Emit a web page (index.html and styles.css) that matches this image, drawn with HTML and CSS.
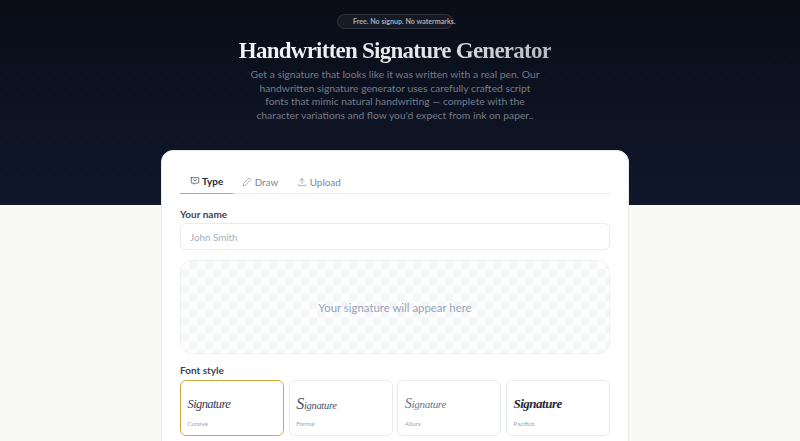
FILE: index.html
```html
<!DOCTYPE html>
<html lang="en">
<head>
<meta charset="utf-8">
<title>Handwritten Signature Generator</title>
<link rel="stylesheet" href="styles.css">
</head>
<body>
<header class="hero">
  <div class="badge"><span class="dot"></span>Free. No signup. No watermarks.</div>
  <h1>Handwritten Signature Generator</h1>
  <p class="lead">Get a signature that looks like it was written with a real pen. Our handwritten signature generator uses carefully crafted script fonts that mimic natural handwriting — complete with the character variations and flow you'd expect from ink on paper..</p>
</header>
<main class="card">
  <nav class="tabs">
    <a class="tab active">
      <svg viewBox="0 0 24 24" class="icon"><path d="M4 4h16a1 1 0 0 1 1 1v11a1 1 0 0 1-1 1h-7l-3 3v-3H4a1 1 0 0 1-1-1V5a1 1 0 0 1 1-1z"/><path d="M8 9l4 3 4-3"/></svg>Type</a>
    <a class="tab">
      <svg viewBox="0 0 24 24" class="icon"><path d="M18 3l3 3L8 20l-5 1 1-5z"/></svg>Draw</a>
    <a class="tab">
      <svg viewBox="0 0 24 24" class="icon"><path d="M12 16V4M7 9l5-5 5 5"/><path d="M3 18v1a2 2 0 0 0 2 2h14a2 2 0 0 0 2-2v-1"/></svg>Upload</a>
  </nav>
  <label class="label" for="name">Your name</label>
  <input class="input" id="name" placeholder="John Smith">
  <div class="preview">Your signature will appear here</div>
  <div class="label font-label">Font style</div>
  <div class="fonts">
    <div class="font selected"><span class="sig sig-cursive">Signature</span><span class="name">Cursive</span></div>
    <div class="font"><span class="sig sig-formal">Signature</span><span class="name">Formal</span></div>
    <div class="font"><span class="sig sig-allura">Signature</span><span class="name">Allura</span></div>
    <div class="font"><span class="sig sig-pacifico">Signature</span><span class="name">Pacifico</span></div>
  </div>
</main>
</body>
</html>
```
FILE: styles.css
```css
* { box-sizing: border-box; }
html, body { margin: 0; height: 441px; overflow: hidden; }
body { background: #fafaf5; font-family: "Lato", "Liberation Sans", sans-serif; color: #1e293b; }

.hero {
  height: 205px;
  padding: 14px 10px 0 0;
  display: flex;
  flex-direction: column;
  align-items: center;
  background-color: #0c1222;
  background-image:
    radial-gradient(circle, rgba(148,163,184,.07) 0.7px, transparent 1px),
    linear-gradient(180deg, #0a0d18 0%, #0f172a 100%);
  background-size: 16px 16px, 100% 100%;
}
.badge {
  height: 15px;
  width: 116px;
  padding: 0 0 0 11px;
  display: flex;
  align-items: center;
  gap: 4px;
  border: 1px solid rgba(255,255,255,.11);
  border-radius: 8px;
  background: rgba(255,255,255,.05);
  color: #a4a8b0;
  font-size: 7.1px;
  font-weight: 700;
  white-space: nowrap;
}
.dot { width: 3px; height: 3px; border-radius: 50%; background: #1f7a5c; }
h1 {
  margin: 8px 0 0;
  font-family: "Liberation Serif", serif;
  font-size: 23px;
  letter-spacing: -0.75px;
  line-height: 28px;
  font-weight: 700;
  white-space: nowrap;
  color: transparent;
  background: linear-gradient(90deg, #f4f5f7 0%, #e8eaee 55%, #b6bac2 100%);
  -webkit-background-clip: text;
  background-clip: text;
}
.lead {
  margin: 3px 0 0;
  width: 292px;
  text-align: center;
  font-size: 10.3px;
  line-height: 13.7px;
  color: #757b88;
}

.card {
  width: 468px;
  height: 320px;
  margin: -55px 0 0 161px;
  padding: 18px 18px 0;
  position: relative;
  background: #fff;
  border: 1px solid #e8eaee;
  border-radius: 12px;
}
.tabs { display: flex; height: 25px; border-bottom: 1px solid #e8ebf0; }
.tab {
  display: flex;
  align-items: center;
  gap: 2.5px;
  height: 25px;
  padding: 0 9.5px;
  font-size: 9.9px;
  color: #7a8598;
}
.tab.active { color: #1e293b; font-weight: 700; border-bottom: 1.5px solid #d4a73a; }
.icon { width: 10px; height: 10px; fill: none; stroke: currentColor; stroke-width: 1.5; stroke-linecap: round; stroke-linejoin: round; }

.label { display: block; margin-top: 14px; font-size: 10px; line-height: 12px; font-weight: 700; color: #3a4556; }
.input {
  display: block;
  width: 100%;
  height: 27px;
  margin-top: 3px;
  padding: 0 9px;
  border: 1px solid #e8ebf0;
  border-radius: 6px;
  background: #fff;
  font: 400 9.8px "Lato", sans-serif;
}
.input::placeholder { color: #a3afc0; opacity: 1; }
.preview {
  height: 94px;
  margin-top: 10px;
  display: flex;
  align-items: center;
  justify-content: center;
  border: 1px solid #edf0f4;
  border-radius: 12px;
  background-color: #fff;
  background-image: conic-gradient(#f5f6fa 25%, #fff 0 50%, #f5f6fa 0 75%, #fff 0);
  background-size: 16px 16px;
  color: #94a3b8;
  font-size: 11.4px;
}
.font-label { margin-top: 10px; }
.fonts { display: grid; grid-template-columns: repeat(4, 1fr); gap: 4.7px; margin-top: 4px; }
.font {
  height: 56px;
  padding: 8px 6.5px 0;
  display: flex;
  flex-direction: column;
  border: 1.5px solid #e6eaf0;
  border-radius: 6px;
  background: #fff;
}
.font.selected { border-color: #d4a73a; }
.sig { display: block; height: 30px; line-height: 30px; color: #334155; font-family: "Liberation Serif", serif; font-style: italic; white-space: nowrap; }
.sig-cursive { font-size: 12.5px; letter-spacing: -0.6px; }
.sig-formal { font-size: 10.5px; letter-spacing: -0.3px; color: #475569; }
.sig-formal::first-letter { font-size: 16px; }
.sig-allura { font-size: 11px; letter-spacing: -0.3px; color: #64748b; }
.sig-allura::first-letter { font-size: 14px; }
.sig-pacifico { font-size: 13px; letter-spacing: -0.5px; font-weight: 700; color: #1e293b; }
.name { margin-top: 1px; font-size: 6.2px; line-height: 8px; color: #94a3b8; }
```
